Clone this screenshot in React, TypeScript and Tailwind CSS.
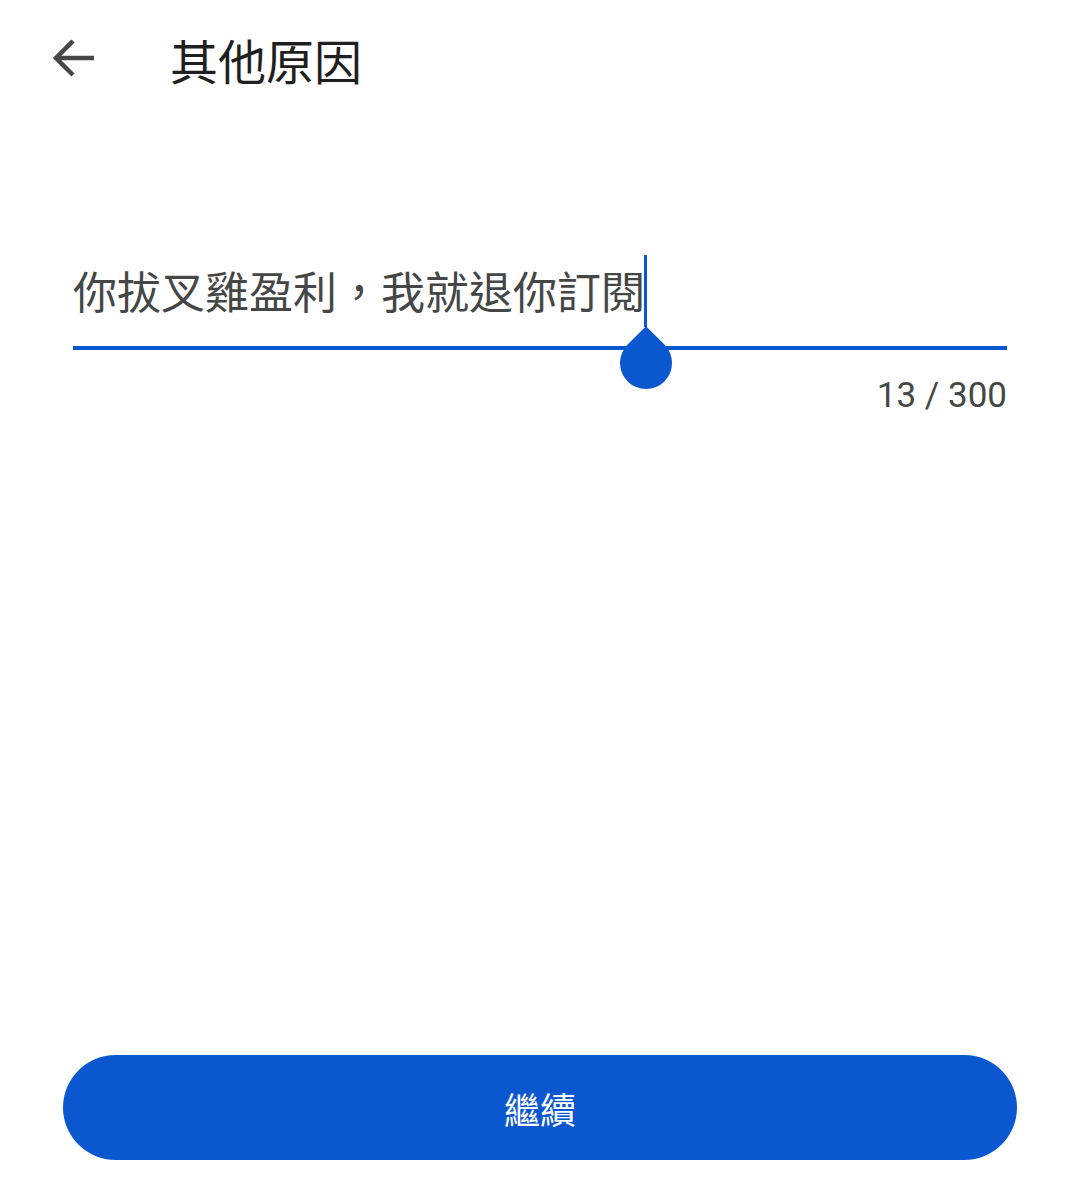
import React from "react";

export default function App() {
  return (
    <div
      className="relative w-[1080px] h-[1190px] bg-white flex flex-col"
      style={{ fontFamily: '"Noto Sans CJK TC", "Noto Sans", Roboto, sans-serif' }}
    >
      {/* Header */}
      <div className="flex items-center h-[124px] pl-[52px]">
        <svg width="44" height="40" viewBox="0 0 44 40" className="mt-[-8px]">
          <path
            d="M42 20 H4 M21 3 L4 20 L21 37"
            fill="none"
            stroke="#444746"
            strokeWidth="4.5"
            strokeLinecap="butt"
            strokeLinejoin="miter"
          />
        </svg>
        <div className="ml-[74px] mt-[-6px] text-[48px] leading-none text-[#1f1f1f]">其他原因</div>
      </div>

      {/* Input */}
      <div className="mt-[132px] mx-[73px] flex flex-col">
        <div className="relative h-[100px]">
          <div className="flex items-center h-[100px]">
            <span className="text-[44px] leading-none text-[#444746] mt-[-32px]">你拔叉雞盈利，我就退你訂閱</span>
          </div>
          {/* cursor */}
          <div className="absolute left-[571px] top-[-1px] w-[3px] h-[72px] bg-[#0b57d0]" />
          {/* underline */}
          <div className="absolute left-0 right-0 top-[90px] h-[4px] bg-[#0b57d0]" />
          {/* teardrop handle */}
          <div className="absolute left-[547px] top-[81px] w-[52px] h-[52px] bg-[#0b57d0] rotate-45 rounded-full rounded-tl-none" />
        </div>
        <div className="mt-[22px] text-right text-[35px] leading-none text-[#444746]" style={{ fontFamily: 'Roboto, "Noto Sans", sans-serif' }}>
          13 / 300
        </div>
      </div>

      <div className="flex-1" />

      {/* Button */}
      <div className="px-[63px] pb-[30px]">
        <button className="w-full h-[105px] rounded-full bg-[#0b57d0] flex items-center justify-center">
          <span className="text-[36px] leading-none text-white">繼續</span>
        </button>
      </div>
    </div>
  );
}
